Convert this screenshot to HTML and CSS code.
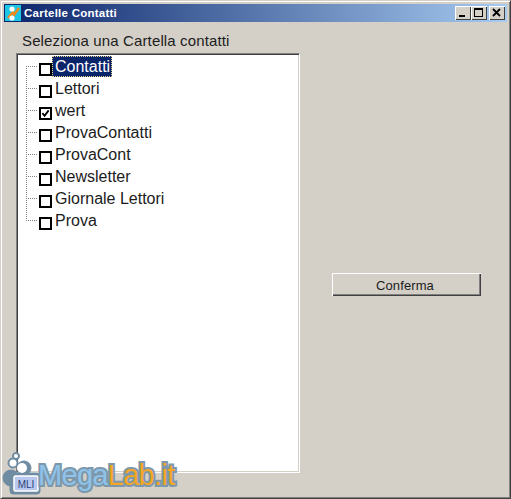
FILE: index.html
```html
<!DOCTYPE html>
<html lang="it">
<head>
<meta charset="utf-8">
<title>Cartelle Contatti</title>
<link rel="stylesheet" href="styles.css">
</head>
<body>
<div class="window">
  <div class="titlebar">
    <svg class="app-icon" width="16" height="16" viewBox="0 0 16 16">
      <rect width="16" height="16" fill="#1cc6e6"/>
      <path d="M3 13 L8 7 L9 10 L14 3" fill="none" stroke="#f08a1c" stroke-width="2.4"/>
      <circle cx="7" cy="4" r="2.6" fill="#fff"/>
      <circle cx="7" cy="13" r="2.6" fill="#fff"/>
    </svg>
    <span class="title">Cartelle Contatti</span>
    <div class="controls">
      <span class="ctl"><svg width="16" height="14" viewBox="0 0 16 14"><rect x="4" y="9" width="6" height="2" fill="#000"/></svg></span>
      <span class="ctl"><svg width="16" height="14" viewBox="0 0 16 14"><path d="M3 2h9v9H3z M4 4v6h7V4z" fill="#000" fill-rule="evenodd"/></svg></span>
      <span class="ctl ctl-close"><svg width="16" height="14" viewBox="0 0 16 14"><path d="M4 3l7 7M11 3l-7 7" stroke="#000" stroke-width="1.8" fill="none"/></svg></span>
    </div>
  </div>
  <div class="content">
    <div class="label">Seleziona una Cartella contatti</div>
    <div class="columns">
      <div class="tree">
        <ul class="nodes">
          <li class="node"><span class="box"></span><span class="text selected">Contatti</span></li>
          <li class="node"><span class="box"></span><span class="text">Lettori</span></li>
          <li class="node"><span class="box"><svg width="10" height="10" viewBox="0 0 10 10"><path d="M1.5 4.5L4 7.5L8.5 1.5" fill="none" stroke="#000" stroke-width="2"/></svg></span><span class="text">wert</span></li>
          <li class="node"><span class="box"></span><span class="text">ProvaContatti</span></li>
          <li class="node"><span class="box"></span><span class="text">ProvaCont</span></li>
          <li class="node"><span class="box"></span><span class="text">Newsletter</span></li>
          <li class="node"><span class="box"></span><span class="text">Giornale Lettori</span></li>
          <li class="node"><span class="box"></span><span class="text">Prova</span></li>
        </ul>
      </div>
      <div class="side">
        <button class="btn" type="button">Conferma</button>
      </div>
    </div>
  </div>
  <div class="logo">
    <svg width="42" height="50" viewBox="0 0 42 50" class="logo-mark">
      <g fill="#6f8ca2" stroke="#6f8ca2">
        <circle cx="15" cy="8" r="3.5"/><circle cx="12" cy="15" r="5"/><circle cx="23" cy="20" r="7"/><circle cx="10" cy="30" r="8"/>
        <rect x="9" y="25" width="30" height="21" rx="3"/>
      </g>
      <circle cx="15" cy="8" r="2" fill="#fff"/><circle cx="12" cy="15" r="3.5" fill="#fff"/><circle cx="21" cy="20" r="5" fill="#fff"/>
      <rect x="13" y="28" width="24" height="15" rx="1.5" fill="#b9c8ee" stroke="#fff" stroke-width="1.5"/>
      <text x="25" y="40" class="logo-mli">MLI</text>
    </svg>
    <span class="logo-text"><span class="mega">Mega</span><span class="lab">Lab.it</span></span>
  </div>
</div>
</body>
</html>
```
FILE: styles.css
```css
* { box-sizing: border-box; }
html, body { margin: 0; padding: 0; }
body { width: 511px; height: 499px; overflow: hidden; background: #d4d0c8; }
.window {
  position: relative;
  width: 511px; height: 499px;
  background: #d4d0c8;
  border: 1px solid;
  border-color: #d4d0c8 #404040 #404040 #d4d0c8;
  box-shadow: inset 1px 1px 0 #fff, inset -1px -1px 0 #808080;
  padding: 3px;
  font-family: "Liberation Sans", Arial, sans-serif;
  color: #000;
}
.titlebar {
  display: flex; align-items: center;
  height: 18px;
  background: linear-gradient(90deg, #0a246a 0%, #a6caf0 100%);
  color: #fff;
  padding-left: 1px; padding-right: 2px;
}
.app-icon { flex: none; margin-right: 3px; }
.title { font-size: 11.5px; font-weight: 700; letter-spacing: 0.25px; white-space: nowrap; }
.controls { margin-left: auto; display: flex; }
.ctl {
  display: block; width: 16px; height: 14px;
  background: #d4d0c8;
  box-shadow: inset 1px 1px 0 #fff, inset -1px -1px 0 #404040;
}
.ctl svg { display: block; }
.ctl-close { margin-left: 2px; }
.content { padding: 11px 0 0 12px; }
.label { font-size: 15px; line-height: 16px; padding-left: 6px; letter-spacing: 0.13px; color: #1c1c1c; }
.columns { display: flex; margin-top: 4px; }
.tree {
  width: 284px; height: 420px;
  background: #fff;
  border: 1px solid;
  border-color: #808080 #fff #fff #808080;
  box-shadow: inset 1px 1px 0 #404040, inset -1px -1px 0 #d4d0c8;
  padding: 2px 0 0 9px;
}
.nodes {
  list-style: none; margin: 0; padding: 0;
  width: 100%;
  background-image: repeating-linear-gradient(180deg, #808080 0 1px, transparent 1px 2px);
  background-size: 1px 156px;
  background-repeat: no-repeat;
  background-position: 0 10px;
}
.node {
  display: flex; align-items: flex-start;
  height: 22px; position: relative;
  background-image: repeating-linear-gradient(90deg, #808080 0 1px, transparent 1px 2px);
  background-size: 11px 1px;
  background-repeat: no-repeat;
  background-position: 0 10px;
  padding-left: 13px;
}
.box {
  flex: none;
  display: flex; align-items: center; justify-content: center;
  width: 13px; height: 13px;
  margin-top: 7px;
  background: #fff;
  border: 2px solid #000;
}
.box svg { display: block; width: 9px; height: 9px; flex: none; }
.text {
  font-size: 16px; line-height: 21px; height: 21px;
  padding: 0 2px 0 3px; white-space: nowrap;
  color: #1c1c1c;
}
.text.selected {
  background: #0a246a; color: #fff;
  outline: 1px dotted #e8d48a; outline-offset: -1px;
}
.side { padding: 220px 0 0 32px; }
.btn {
  display: block;
  width: 149px; height: 23px;
  padding: 2px 3px 0 0;
  background: #d4d0c8;
  border: 0;
  box-shadow: inset 1px 1px 0 #fff, inset -1px -1px 0 #404040, inset -2px -2px 0 #808080;
  font-family: "Liberation Sans", Arial, sans-serif;
  font-size: 13px; letter-spacing: 0.1px; color: #1c1c1c;
}
.logo {
  position: absolute; left: 0; top: 447px;
  display: flex; align-items: flex-end;
  height: 50px;
}
.logo-mark { display: block; flex: none; }
.logo-mli { font-family: "Liberation Sans", Arial, sans-serif; font-size: 10px; fill: #2c3f78; text-anchor: middle; }
.logo-text {
  margin-left: -5px; margin-bottom: 7px;
  font-size: 29px; line-height: 32px; letter-spacing: -0.7px;
  font-family: "Liberation Sans", Arial, sans-serif;
  white-space: nowrap;
  paint-order: stroke fill;
  -webkit-text-stroke: 4px #7d98ab;
}
.mega { color: #8fc3ea; }
.lab { color: #f5a623; }
```
